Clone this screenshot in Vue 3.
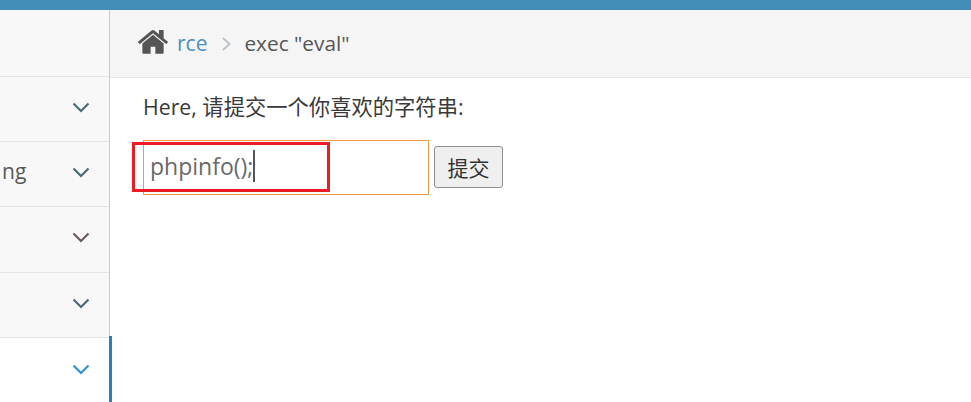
<template>
  <div class="page">
    <div class="topbar"></div>
    <div class="main">
      <aside class="sidebar">
        <div class="side-top"></div>
        <div v-for="row in rows" :key="row.id" class="side-row" :class="{ active: row.active }">
          <span class="side-label">{{ row.label }}</span>
          <svg class="chev" width="18" height="11" viewBox="0 0 18 11">
            <path d="M1.5 1.5 L9 9 L16.5 1.5" fill="none" :stroke="row.color" stroke-width="2.2" />
          </svg>
        </div>
      </aside>
      <section class="content">
        <div class="crumbs">
          <svg class="home" width="30" height="24" viewBox="90 250 1612 1300">
            <path fill="#555" d="M1472 992v480q0 26-19 45t-45 19h-384v-384h-256v384h-384q-26 0-45-19t-19-45v-480q0-1 .5-3t.5-3l575-474 575 474q1 2 1 6zm223-69l-62 74q-8 9-21 11h-3q-13 0-21-7l-692-577-692 577q-12 8-24 7-13-2-21-11l-62-74q-8-10-7-23.500t11-21.500l719-599q32-26 76-26t76 26l244 204v-195q0-14 9-23t23-9h192q14 0 23 9t9 23v408l219 182q10 8 11 21.500t-7 23.500z" />
          </svg>
          <a class="crumb-link">rce</a>
          <svg class="sep" width="9" height="14" viewBox="0 0 9 14">
            <path d="M1 1 L7.5 7 L1 13" fill="none" stroke="#b9c0c6" stroke-width="1.8" />
          </svg>
          <span class="crumb-now">exec "eval"</span>
        </div>
        <div class="body">
          <p class="prompt">Here, 请提交一个你喜欢的字符串:</p>
          <form class="form" @submit.prevent>
            <div class="field">
              <span class="field-text">phpinfo();</span><span class="caret"></span>
              <div class="mark"></div>
            </div>
            <button class="submit" type="submit">提交</button>
          </form>
        </div>
      </section>
    </div>
  </div>
</template>

<script setup>
const rows = [
  { id: 1, label: '', color: '#4a6a78' },
  { id: 2, label: 'ng', color: '#4a6a78' },
  { id: 3, label: '', color: '#6b5a5a' },
  { id: 4, label: '', color: '#4a6a78' },
  { id: 5, label: '', color: '#2f93d5', active: true },
]
</script>

<style>
html, body {
  margin: 0;
  background: #fff;
  overflow: hidden;
}
</style>

<style scoped>
.page {
  width: 971px;
  height: 402px;
  overflow: hidden;
  font-family: "Open Sans", "Noto Sans CJK SC", sans-serif;
  color: #444;
}

.topbar {
  height: 10px;
  background: #438eb9;
}

.main {
  display: flex;
  height: 392px;
}

.sidebar {
  width: 110px;
  box-sizing: border-box;
  flex-shrink: 0;
  border-right: 1px solid #ccc;
  background: #f8f8f8;
  position: relative;
}

.side-top {
  box-sizing: border-box;
  height: 67px;
  border-bottom: 1px solid #e5e5e5;
}

.side-row {
  height: 65.2px;
  box-sizing: border-box;
  border-bottom: 1px solid #e5e5e5;
  display: flex;
  align-items: center;
  justify-content: flex-end;
  padding: 0 19px 3px 0;
  position: relative;
}

.side-row.active {
  background: #fff;
  border-bottom: none;
  padding-bottom: 2px;
}

.side-row.active::after {
  content: "";
  position: absolute;
  top: -2px;
  bottom: 0;
  right: -3px;
  width: 3px;
  background: #2b7dbc;
}

.side-label {
  position: absolute;
  left: 2px;
  top: 15px;
  font-size: 21px;
  line-height: 28px;
  color: #585858;
}

.chev {
  display: block;
}

.content {
  flex: 1;
  min-width: 0;
}

.crumbs {
  height: 68px;
  box-sizing: border-box;
  background: #f5f5f5;
  border-bottom: 1px solid #e5e5e5;
  display: flex;
  align-items: center;
  padding: 0 0 2px 28px;
  font-size: 21px;
}

.home {
  margin-right: 9px;
  margin-top: -2px;
}

.crumb-link {
  color: #4c8fbd;
}

.sep {
  margin: 2px 13px 0 15px;
}

.crumb-now {
  color: #555;
  font-size: 20.8px;
}

.body {
  padding: 15px 0 0 33px;
}

.prompt {
  margin: 0;
  font-size: 21.3px;
  line-height: 28px;
  color: #393939;
}

.form {
  display: flex;
  align-items: flex-start;
  gap: 5px;
  margin-top: 19px;
}

.field {
  width: 286px;
  height: 55px;
  box-sizing: border-box;
  border: 1px solid #f59942;
  display: flex;
  align-items: center;
  padding: 0 0 3px 6px;
  position: relative;
  font-size: 23px;
  color: #696969;
}

.caret {
  width: 2px;
  height: 32px;
  background: #555;
}

.mark {
  position: absolute;
  left: -12px;
  top: 1px;
  width: 198px;
  height: 50px;
  box-sizing: border-box;
  border: 3px solid #ed1c24;
}

.submit {
  width: 69px;
  height: 42px;
  box-sizing: border-box;
  margin-top: 6px;
  padding: 0;
  border: 1px solid #8f8f8f;
  border-radius: 3px;
  background: #efefef;
  font-family: inherit;
  font-size: 21px;
  color: #333;
}
</style>
